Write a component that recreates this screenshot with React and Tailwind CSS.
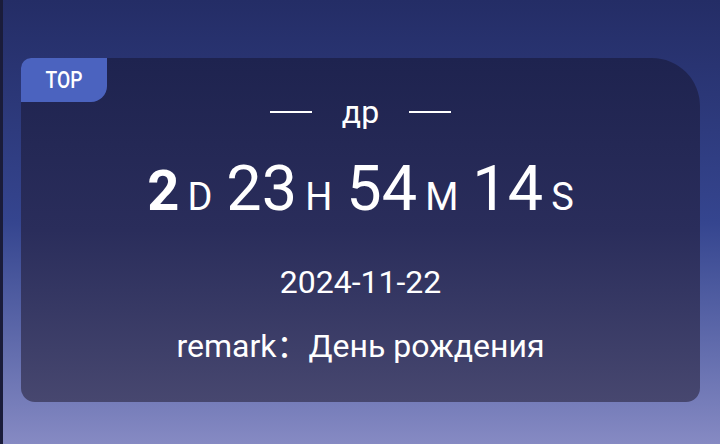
import React from 'react';

const units = [
    { value: '2', unit: 'D', bold: true },
    { value: '23', unit: 'H' },
    { value: '54', unit: 'M' },
    { value: '14', unit: 'S' },
];

const App = () => {
    return (
        <div
            className="w-[720px] h-[444px] overflow-hidden border-l-[3px] border-[#1a1c3a] bg-gradient-to-b from-[#242d66] via-[#35458f] to-[#868ac3] text-white"
            style={{ fontFamily: 'Roboto, "Noto Sans CJK SC", sans-serif' }}
        >
            <div className="relative ml-[18px] mt-[58px] w-[679px] h-[344px] rounded-tl-[10px] rounded-tr-[48px] rounded-b-[14px] bg-gradient-to-b from-[#1e234f] via-[#2a2d5b] to-[#47476f] flex flex-col items-center">
                <div className="absolute left-0 top-0 w-[86px] h-[44px] bg-[#4b63bf] rounded-tl-[10px] rounded-br-[16px] flex items-center justify-center">
                    <span className="text-[24px] font-medium leading-none scale-x-[0.8]">TOP</span>
                </div>

                <div className="mt-[36px] h-[36px] flex items-center gap-[30px]">
                    <div className="w-[42px] h-[1.5px] bg-white"></div>
                    <span className="text-[32px] leading-none">др</span>
                    <div className="w-[42px] h-[1.5px] bg-white"></div>
                </div>

                <div className="mt-[27px] flex items-baseline leading-none">
                    {units.map((u, i) => (
                        <div key={i} className="flex items-baseline mr-[14px] last:mr-0">
                            <span className={u.bold ? 'text-[56px] font-bold' : 'text-[63px]'}>{u.value}</span>
                            <span className="text-[38px] ml-[8px]">{u.unit}</span>
                        </div>
                    ))}
                </div>

                <div className="mt-[43px] text-[32px] leading-[38px]">2024-11-22</div>
                <div className="mt-[26px] text-[32px] leading-[38px]">remark：День рождения</div>
            </div>
        </div>
    );
};

export default App;
